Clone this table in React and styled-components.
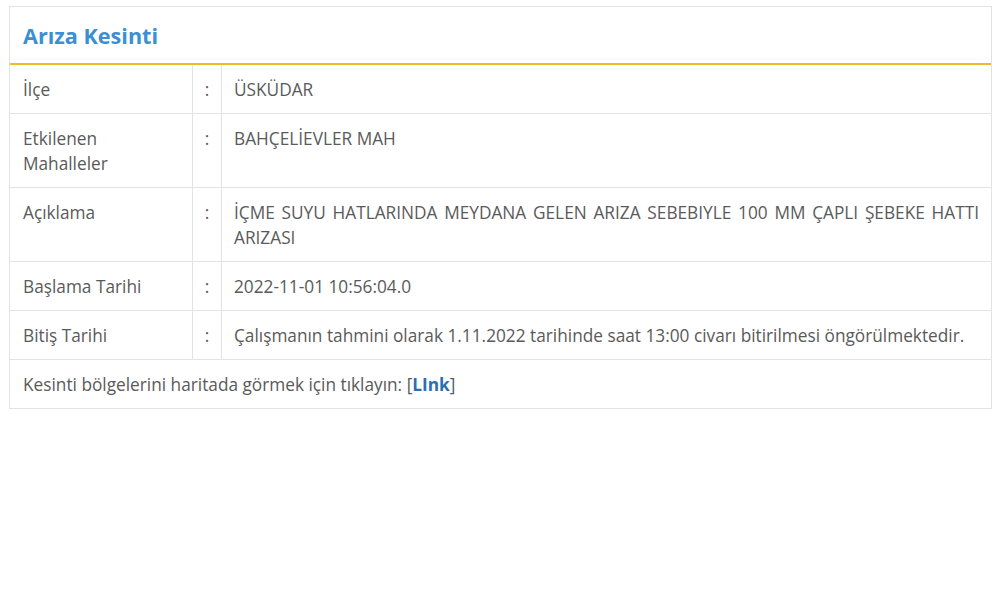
import React from 'react';
import styled, { createGlobalStyle } from 'styled-components';

const GlobalStyle = createGlobalStyle`
    body {
        margin: 0;
        background: #ffffff;
        font-family: "Open Sans", "Liberation Sans", sans-serif;
    }
`;

const Page = styled.div`
    padding: 6px 8px 0 9px;
`;

const Panel = styled.div`
    width: 983px;
    border: 1px solid #e3e3e3;
    box-sizing: border-box;
    background: #fff;
`;

const Header = styled.div`
    height: 58px;
    display: flex;
    align-items: center;
    padding: 0 13px;
    border-bottom: 2px solid #f3b72c;
    box-sizing: border-box;
`;

const Title = styled.h3`
    margin: 0;
    font-size: 21.6px;
    font-weight: 700;
    color: #3b8fd5;
`;

const Table = styled.div`
    display: grid;
    grid-template-columns: 183px 29px 1fr;
`;

const Cell = styled.div`
    padding-top: 12px;
    padding-bottom: 11px;
    padding-left: ${p => (p.$colon ? '0' : p.$value ? '12px' : '13px')};
    padding-right: ${p => (p.$colon ? '0' : '12px')};
    font-size: 17.25px;
    line-height: 25px;
    color: #5a5a5a;
    border-bottom: 1px solid #e3e3e3;
    border-right: ${p => (p.$value ? 'none' : '1px solid #e3e3e3')};
    text-align: ${p => (p.$colon ? 'center' : p.$value ? 'justify' : 'left')};
`;

const Footer = styled.div`
    padding: 12px 13px 11px;
    font-size: 17.25px;
    line-height: 25px;
    color: #5a5a5a;
`;

const LinkText = styled.a`
    color: #2c6fb0;
    font-weight: 700;
    text-decoration: none;
`;

const rows = [
    ['İlçe', 'ÜSKÜDAR'],
    ['Etkilenen Mahalleler', 'BAHÇELİEVLER MAH'],
    ['Açıklama', 'İÇME SUYU HATLARINDA MEYDANA GELEN ARIZA SEBEBIYLE 100 MM ÇAPLI ŞEBEKE HATTI ARIZASI'],
    ['Başlama Tarihi', '2022-11-01 10:56:04.0'],
    ['Bitiş Tarihi', 'Çalışmanın tahmini olarak 1.11.2022 tarihinde saat 13:00 civarı bitirilmesi öngörülmektedir.'],
];

const App = () => {
    return (
        <>
        <GlobalStyle />
        <Page>
            <Panel>
                <Header>
                    <Title>Arıza Kesinti</Title>
                </Header>
                <Table>
                    {rows.map(([label, value]) => (
                        <React.Fragment key={label}>
                            <Cell>{label === 'Etkilenen Mahalleler' ? <>Etkilenen<br />Mahalleler</> : label}</Cell>
                            <Cell $colon>:</Cell>
                            <Cell $value>{value}</Cell>
                        </React.Fragment>
                    ))}
                </Table>
                <Footer>
                    Kesinti bölgelerini haritada görmek için tıklayın: [<LinkText href="#">LInk</LinkText>]
                </Footer>
            </Panel>
        </Page>
        </>
    );
};

export default App;
